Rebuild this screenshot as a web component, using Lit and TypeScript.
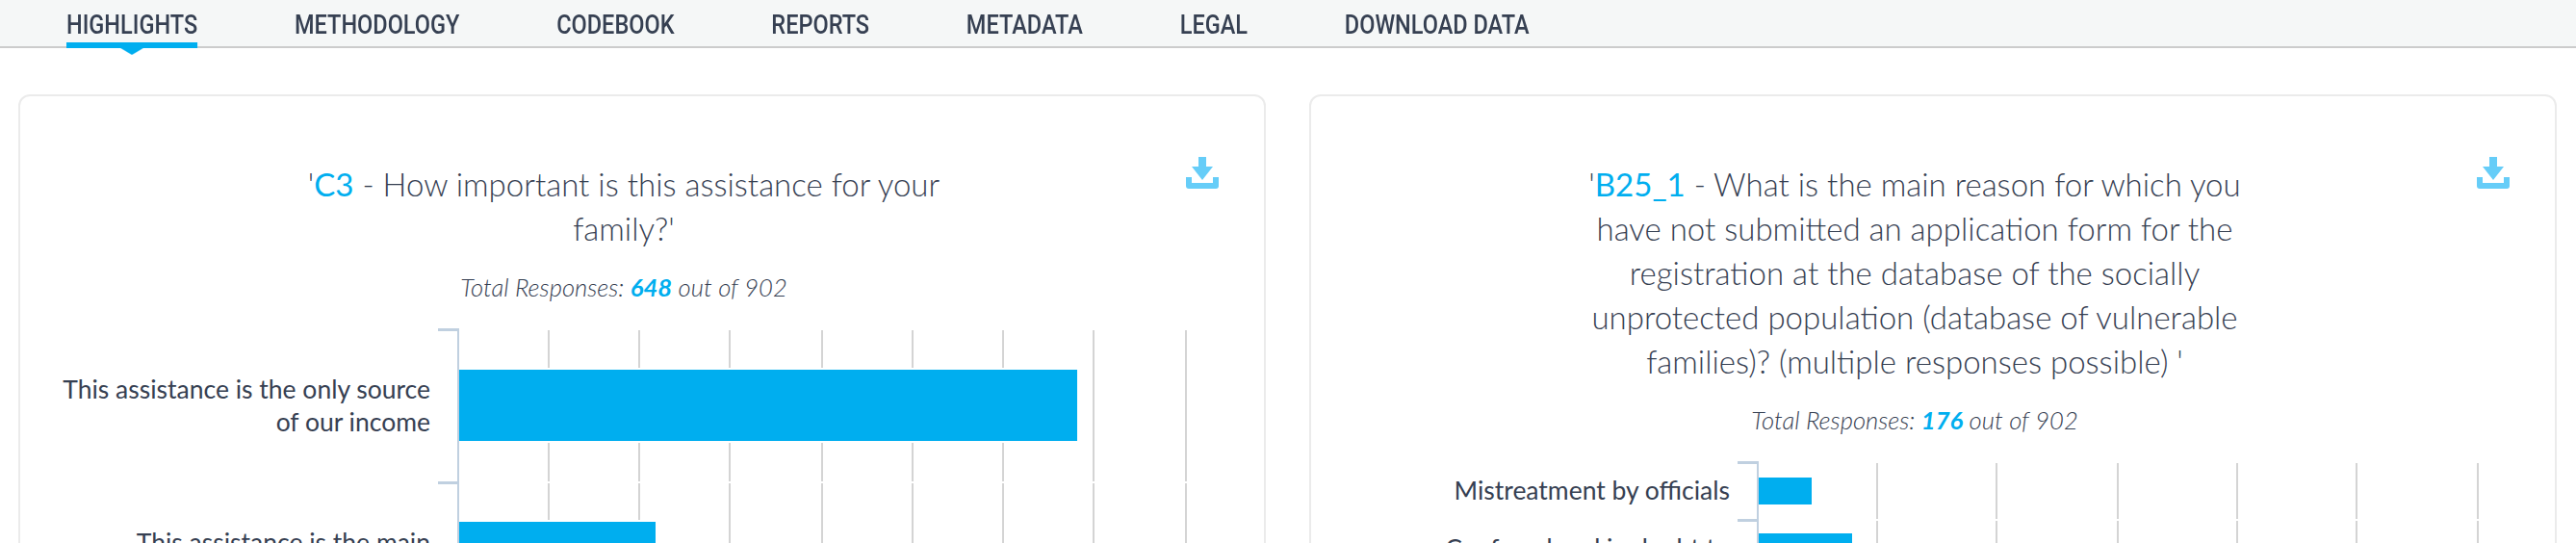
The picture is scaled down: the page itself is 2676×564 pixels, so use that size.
import { LitElement, html, css } from 'lit';
import { customElement } from 'lit/decorators.js';

const TABS = ['HIGHLIGHTS', 'METHODOLOGY', 'CODEBOOK', 'REPORTS', 'METADATA', 'LEGAL', 'DOWNLOAD DATA'];

const downloadIcon = html`
  <svg class="dl" width="34" height="33" viewBox="0 0 34 33">
    <path d="M13 0h8v10h7L17 24 6 10h7z" fill="#66cdf8"/>
    <path d="M0 21h6v6h22v-6h6v9a3 3 0 0 1-3 3H3a3 3 0 0 1-3-3z" fill="#66cdf8"/>
  </svg>`;

interface Row {
  label: unknown;
  height: number;
  barTop: number;
  barHeight: number;
  barWidth: number;
}

@customElement('app-root')
export class AppRoot extends LitElement {
  static styles = css`
    :host {
      display: block;
      height: 564px;
      overflow: hidden;
      background: #fff;
      color: #364052;
      font-family: 'Lato', 'Noto Sans', sans-serif;
    }
    nav {
      height: 48px;
      background: #f5f7f7;
      border-bottom: 2px solid #cccccc;
    }
    /* the original nav face is a narrow one, so squeeze the row as a whole */
    .tabs {
      display: flex;
      gap: 120px;
      width: max-content;
      padding-left: 69px;
      transform: scaleX(0.84);
      transform-origin: 69px 0;
    }
    .tab {
      position: relative;
      height: 50px;
      box-sizing: border-box;
      padding-top: 10px;
      font-family: 'Roboto', 'Liberation Sans', sans-serif;
      font-size: 28px;
      font-weight: 500;
      line-height: 32px;
      white-space: nowrap;
    }
    .tab.active {
      border-bottom: 6px solid #00aeef;
    }
    .tab.active::after {
      content: '';
      position: absolute;
      left: 50%;
      top: 50px;
      margin-left: -14px;
      border: 14px solid transparent;
      border-top: 7px solid #00aeef;
      border-bottom: 0;
    }
    .cards {
      display: grid;
      grid-template-columns: 1296px 1296px;
      gap: 45px;
      padding: 48px 0 0 19px;
    }
    .card {
      position: relative;
      height: 600px;
      box-sizing: border-box;
      border: 2px solid #ebebeb;
      border-radius: 12px;
      background: #fff;
    }
    .dl {
      position: absolute;
      right: 47px;
      top: 63px;
    }
    .head {
      padding: 68px 38px 0 0;
      text-align: center;
    }
    h2 {
      width: 725px;
      margin: 0 auto;
      font-size: 33px;
      line-height: 46px;
      font-weight: 300;
    }
    h2 b {
      color: #00aeef;
      font-weight: 400;
    }
    .total {
      margin-top: 21px;
      font-size: 25.6px;
      line-height: 34px;
      font-style: italic;
      font-weight: 300;
    }
    .total b {
      color: #00aeef;
      font-weight: 700;
    }
    .chart {
      margin-top: 26px;
    }
    .row {
      display: grid;
      grid-template-columns: var(--axis) 1fr;
    }
    .label {
      position: relative;
      display: flex;
      align-items: center;
      justify-content: flex-end;
      padding: 0 28px 0 0;
      text-align: right;
      font-size: 26.5px;
      line-height: 34px;
      border-right: 2px solid #c0d0e0;
    }
    .label::before {
      content: '';
      position: absolute;
      top: 0;
      right: 0;
      width: 20px;
      height: 3px;
      background: #c0d0e0;
    }
    .plot {
      position: relative;
    }
    .plot i {
      position: absolute;
      top: 2px;
      bottom: 0;
      width: 2px;
      background: #d4d4d4;
    }
    .bar {
      position: relative;
      background: #00aeef;
      box-shadow: 0 -2px 0 #fff, 0 2px 0 #fff;
    }
  `;

  private chart(axis: number, rows: Row[], ticks: number[]) {
    return html`
      <div class="chart" style="--axis:${axis}px">
        ${rows.map(r => html`
          <div class="row" style="height:${r.height}px">
            <div class="label"><span>${r.label}</span></div>
            <div class="plot">
              ${ticks.map(t => html`<i style="left:${t}px"></i>`)}
              <div class="bar" style="top:${r.barTop}px;width:${r.barWidth}px;height:${r.barHeight}px"></div>
            </div>
          </div>`)}
      </div>`;
  }

  render() {
    return html`
      <nav>
        <div class="tabs">
          ${TABS.map((t, i) => html`<div class="tab ${i === 0 ? 'active' : ''}">${t}</div>`)}
        </div>
      </nav>
      <div class="cards">
        <section class="card">
          ${downloadIcon}
          <div class="head">
            <h2>'<b>C3</b> - How important is this assistance for your family?'</h2>
            <div class="total">Total Responses: <b>648</b> out of 902</div>
          </div>
          ${this.chart(456, [
            { label: html`This assistance is the only source<br />of our income`, height: 159, barTop: 43, barHeight: 74, barWidth: 642 },
            { label: html`This assistance is the main<br />source of our income`, height: 159, barTop: 42, barHeight: 74, barWidth: 204 },
          ], [92, 186, 280, 376, 470, 564, 658, 754])}
        </section>
        <section class="card">
          ${downloadIcon}
          <div class="head">
            <h2>'<b>B25_1</b> - What is the main reason for which you have not submitted an application form for the registration at the database of the socially unprotected population (database of vulnerable families)? (multiple responses possible) '</h2>
            <div class="total">Total Responses: <b>176</b> out of 902</div>
          </div>
          ${this.chart(465, [
            { label: 'Mistreatment by officials', height: 60, barTop: 17, barHeight: 28, barWidth: 55 },
            { label: 'Confused and in doubt to', height: 60, barTop: 15, barHeight: 28, barWidth: 97 },
          ], [122, 246, 372, 496, 620, 746])}
        </section>
      </div>
    `;
  }
}
